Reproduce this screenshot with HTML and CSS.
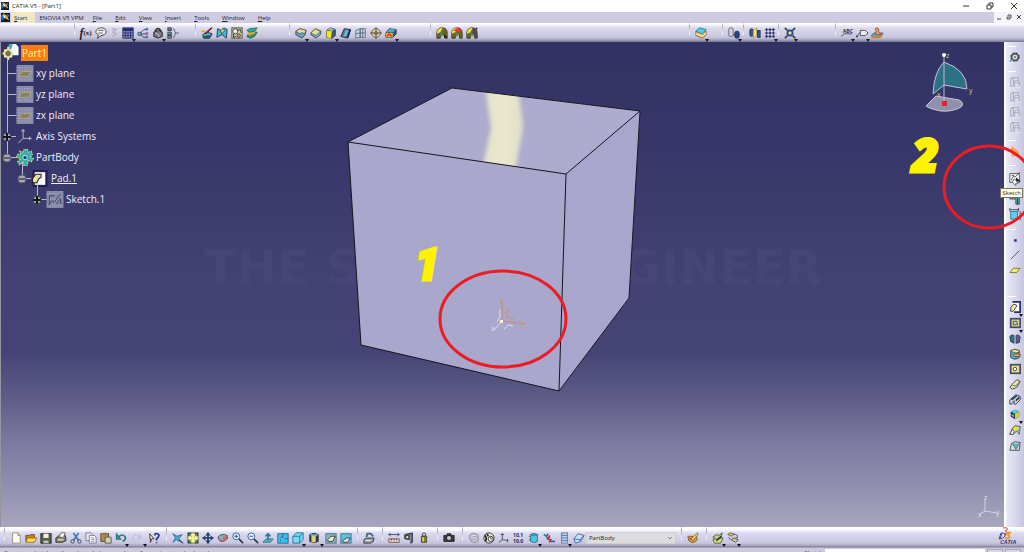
FILE: index.html
```html
<!DOCTYPE html>
<html lang="en">
<head>
<meta charset="utf-8">
<title>CATIA V5 - [Part1]</title>
<link rel="stylesheet" href="styles.css">
</head>
<body>
<svg class="defs" aria-hidden="true">
  <defs>
    <symbol id="logo" viewBox="0 0 10 10"><rect width="10" height="10" fill="#10182c"/><path d="M0 2L5 5L1 9Z" fill="#2a6fae"/><path d="M2 0L7 3L9 8L5 6Z" fill="#e8a33c"/><path d="M1 1L5 4L4 6Z" fill="#fff"/><path d="M6 1L9 2L9 5Z" fill="#2d76bd"/></symbol>
    <symbol id="bubble" viewBox="0 0 14 14"><path d="M1 6C1 3 4 1 8 1C12 1 13 4 13 6C13 8 10 10 7 10L3 13L4 9C2 8 1 7 1 6Z" fill="#eee" stroke="#333"/><path d="M4 4H10M4 7H9" stroke="#555"/></symbol>
    <symbol id="dim" viewBox="0 0 14 14"><path d="M5 2L9 3L6 6L9 8L6 11" fill="none" stroke="#b5b3c4" stroke-width="2"/></symbol>
    <symbol id="table" viewBox="0 0 14 14"><rect x="1" y="1" width="12" height="12" fill="#8d92bd" stroke="#22285e"/><path d="M1 3H13" stroke="#1d2569" stroke-width="3"/><path d="M1 7H13M1 10H13M4 3V13M7 3V13M10 3V13" stroke="#28307a"/></symbol>
    <symbol id="tree" viewBox="0 0 14 14"><path d="M3 8L8 3H11M3 8H11M3 8L8 12H11" fill="none" stroke="#335"/><circle cx="3" cy="8" r="2" fill="#59c3d9" stroke="#245"/><rect x="10" y="1" width="3" height="3" fill="#5577c5"/><rect x="10" y="6" width="3" height="3" fill="#b8578c"/><rect x="10" y="10" width="3" height="3" fill="#5577c5"/></symbol>
    <symbol id="lock" viewBox="0 0 14 14"><path d="M4 7V4Q7 0 10 4V7" fill="none" stroke="#333" stroke-width="2"/><path d="M2 6L8 4L12 6V11L7 13L2 11Z" fill="#77787e" stroke="#222"/><path d="M4 7L8 9V12" stroke="#ccc" fill="none"/></symbol>
    <symbol id="rules" viewBox="0 0 14 14"><rect x="1" y="1" width="4" height="3" fill="#638b98" stroke="#334"/><rect x="1" y="6" width="4" height="3" fill="#55b7c5" stroke="#334"/><rect x="1" y="10" width="4" height="3" fill="#888" stroke="#334"/><path d="M7 2Q9 2 9 5Q9 7 11 7Q9 7 9 10Q9 12 7 12M11 7H14" fill="none" stroke="#557"/></symbol>
    <symbol id="brush" viewBox="0 0 14 14"><path d="M2 9L7 6L13 8L10 13H3Z" fill="#285a78" stroke="#162c46"/><path d="M3 10L8 8L11 9" fill="none" stroke="#56cbd8" stroke-width="2"/><path d="M13 1L7 7L5 8L6 6L12 1Z" fill="#d6584c" stroke="#602"/><path d="M1 4L5 6" stroke="#e8a13e" stroke-width="2"/></symbol>
    <symbol id="surface" viewBox="0 0 14 14"><path d="M1 12L2 2L6 4L9 1L13 3L12 13L7 9Z" fill="#47b6ce" stroke="#17334e"/><path d="M5 4L7 8L11 3" fill="#f1d848" stroke="#233f80"/></symbol>
    <symbol id="gearbox" viewBox="0 0 14 14"><rect x="1" y="1" width="12" height="12" fill="#d6d09e" stroke="#4a4a42"/><circle cx="5" cy="5" r="3" fill="#eee" stroke="#333"/><circle cx="9" cy="10" r="2" fill="#aaa" stroke="#333"/><path d="M7 4L11 3L12 7M3 8L3 12L6 11" fill="none" stroke="#222"/></symbol>
    <symbol id="layers" viewBox="0 0 14 14"><path d="M1 11L4 7L13 6L10 11L5 13Z" fill="#33936f" stroke="#164"/><path d="M1 8L4 5L13 3L10 8L4 10Z" fill="#e6a434"/><path d="M1 4L4 2L13 1L10 5L4 6Z" fill="#32a2a5" stroke="#276"/></symbol>
    <symbol id="fillet" viewBox="0 0 14 14"><path d="M1 5L6 2L13 4L12 9L8 13L1 9Z" fill="#5aa6b8" stroke="#444"/><path d="M1 5L6 2L13 4L11 8Q8 5 6 8Z" fill="#e8dcae" stroke="#665"/></symbol>
    <symbol id="chamfer" viewBox="0 0 14 14"><path d="M1 7L6 2L13 5L12 9L7 13L1 9Z" fill="#62b6c9" stroke="#444"/><path d="M1 7L6 2L12 5L7 10Z" fill="#eadb9d" stroke="#665"/></symbol>
    <symbol id="draft" viewBox="0 0 14 14"><path d="M2 4L6 1L12 3V10L8 13L2 12Z" fill="#345c79" stroke="#333"/><path d="M2 4L8 5L7 13L2 12Z" fill="#f8e700"/><path d="M3 3L6 1L11 3L8 5Z" fill="#95bcc5"/></symbol>
    <symbol id="shell" viewBox="0 0 14 14"><path d="M1 11L5 2L12 3L9 13Z" fill="#617486" stroke="#223"/><path d="M4 11L7 3L10 4L7 11Z" fill="#54c2d1"/><path d="M12 3L9 12" stroke="#17205c" stroke-width="2"/></symbol>
    <symbol id="thick" viewBox="0 0 14 14"><path d="M1 4L6 2V12L1 13ZM6 2H12V12H6ZM9 2V12M1 8L6 7H12" fill="#c5dbe4" stroke="#586681"/></symbol>
    <symbol id="target" viewBox="0 0 14 14"><circle cx="7" cy="7" r="5" fill="#e7dcad" stroke="#554d43"/><path d="M0 7H14M7 0V14" stroke="#443b39"/><circle cx="7" cy="7" r="2" fill="none" stroke="#665"/></symbol>
    <symbol id="replace" viewBox="0 0 14 14"><path d="M1 7L5 2L13 3V8L9 12H1Z" fill="#2e668b" stroke="#223"/><path d="M1 7H9V12H1Z" fill="#f7bc38"/><path d="M2 11L5 8L8 11" fill="none" stroke="#df3f2a" stroke-width="2"/><path d="M5 2L13 3L9 6L2 6Z" fill="#51acc5"/></symbol>
    <symbol id="arch" viewBox="0 0 14 14"><path d="M1 13V6Q2 1 7 1Q13 1 13 7V13H10V9Q7 6 5 9V13Z" fill="#6c692d" stroke="#33351b"/><path d="M1 8Q1 1 8 1L5 6Z" fill="#f0e143"/><circle cx="7" cy="9" r="2" fill="#5d8b63"/></symbol>
    <symbol id="sheets" viewBox="0 0 14 14"><path d="M1 10L9 13L13 9V5L1 5Z" fill="#edb848" stroke="#864"/><path d="M1 8L9 11L13 7" fill="none" stroke="#fff"/><path d="M1 5L5 1L13 3L9 8Z" fill="#55cbe5" stroke="#28809d"/></symbol>
    <symbol id="cyls" viewBox="0 0 14 14"><rect x="1" y="1" width="5" height="10" rx="2" fill="#d5d5df" stroke="#556"/><rect x="8" y="5" width="5" height="8" rx="2" fill="#284680" stroke="#182c55"/><path d="M6 9H8" stroke="#333"/></symbol>
    <symbol id="bodies" viewBox="0 0 14 14"><rect x="1" y="2" width="4" height="9" rx="2" fill="#315586" stroke="#223463"/><path d="M5 4L9 1V10L5 13Z" fill="#efe28b" stroke="#aa9c47"/><rect x="10" y="4" width="3" height="8" fill="#315586" stroke="#223463"/></symbol>
    <symbol id="grid" viewBox="0 0 14 14"><path d="M1 3H13M1 7H13M1 11H13M3 1V13M7 1V13M11 1V13" stroke="#4a529a"/><path d="M2 3H4M6 3H8M10 3H12M2 7H4M6 7H8M10 7H12M2 11H4M6 11H8M10 11H12" stroke="#202565" stroke-width="2"/></symbol>
    <symbol id="snap" viewBox="0 0 14 14"><circle cx="7" cy="7" r="3" fill="#ebe46c" stroke="#248" stroke-width="2"/><path d="M1 1L4 4M13 1L10 4M1 13L4 10M13 13L10 10" stroke="#345" stroke-width="2"/></symbol>
    <symbol id="abc" viewBox="0 0 14 14"><text x="2" y="7" class="icon-text" font-size="6">ABC</text><path d="M0 11L4 8H13" fill="none" stroke="#446"/></symbol>
    <symbol id="tag" viewBox="0 0 14 14"><path d="M1 11L5 6M5 4H11L14 7L11 10H5Z" fill="#eee" stroke="#445"/><circle cx="1" cy="11" r="1" fill="#124"/></symbol>
    <symbol id="stamp" viewBox="0 0 14 14"><path d="M1 9L4 7H14L11 12H1Z" fill="#4bb7c7" stroke="#555"/><path d="M5 9L6 5L5 2Q8 -1 9 3L9 6L12 9Z" fill="#e5a66d" stroke="#943"/><path d="M1 12L10 12L13 9" stroke="#e57c22" fill="none" stroke-width="2"/></symbol>
    <symbol id="gear" viewBox="0 0 14 14"><circle cx="7" cy="7" r="4" fill="#d3d8df" stroke="#4a5058" stroke-width="2"/><circle cx="7" cy="7" r="5" fill="none" stroke="#333" stroke-dasharray="2 2"/><circle cx="7" cy="7" r="1" fill="#345"/><path d="M1 12L4 10" stroke="#39a9cd" stroke-width="2"/></symbol>
    <symbol id="ghost" viewBox="0 0 14 14"><path d="M2 3L5 2V11L2 12ZM6 6Q9 4 12 6V12Q9 14 6 12ZM6 8H12M3 2H11V5" fill="#dedeea" stroke="#a3a2b8"/><path d="M7 13H13" stroke="#fff"/></symbol>
    <symbol id="select" viewBox="0 0 14 14"><path d="M3 1L13 9L9 10L12 13H3Z" fill="#f3a347"/><path d="M5 6L9 10H5Z" fill="#fff0ce"/></symbol>
    <symbol id="sketch" viewBox="0 0 14 14"><rect x="1" y="2" width="11" height="10" fill="#fff" stroke="#444"/><path d="M3 10Q4 3 7 6L13 0M3 4H6" fill="none" stroke="#444"/><path d="M8 6L14 11H8Z" fill="#172b35"/><path d="M6 8L11 13L8 13L8 16L4 12Z" fill="#fff" stroke="#555"/></symbol>
    <symbol id="pos" viewBox="0 0 14 14"><path d="M1 3H12V13H8V7H1Z" fill="#54acb8" stroke="#345"/><path d="M10 3V13M1 2H13" stroke="#203562"/></symbol>
    <symbol id="ref" viewBox="0 0 14 14"><rect x="2" y="4" width="8" height="9" fill="#67cbe1" stroke="#327c96"/><path d="M1 2H11M1 0V4M11 0V4M13 4V14" stroke="#253c52"/></symbol>
    <symbol id="dot" viewBox="0 0 14 14"><rect x="6" y="6" width="3" height="3" fill="#29387c"/></symbol>
    <symbol id="line" viewBox="0 0 14 14"><path d="M2 12L12 2" stroke="#29488a" stroke-width="1"/></symbol>
    <symbol id="plane" viewBox="0 0 14 14"><path d="M1 10L5 5H13L9 10Z" fill="#f2ed68" stroke="#716d2c"/></symbol>
    <symbol id="pad" viewBox="0 0 14 14"><rect x="4" y="1" width="9" height="12" fill="#fff"/><path d="M4 1H13V13H6" fill="none" stroke="#242f67" stroke-width="2"/><path d="M2 8L5 4H8L9 6L5 12H2Z" fill="#eee7a3" stroke="#334"/></symbol>
    <symbol id="pocket" viewBox="0 0 14 14"><rect x="2" y="2" width="11" height="10" fill="#ddd783" stroke="#454d6b" stroke-width="2"/><path d="M5 5H9L10 9H5Z" fill="#b6d5db" stroke="#444"/></symbol>
    <symbol id="shaft" viewBox="0 0 14 14"><path d="M1 4Q3 1 6 3V12L2 10Z" fill="#287983" stroke="#243156"/><path d="M8 3Q12 1 13 5L12 11L8 12Z" fill="#52618c" stroke="#243156"/><path d="M7 1V14" stroke="#ccc"/></symbol>
    <symbol id="groove" viewBox="0 0 14 14"><path d="M2 3Q7 0 12 3V11Q7 15 2 11Z" fill="#47b6cc" stroke="#335"/><path d="M2 3Q7 0 12 3V5Q7 7 2 4Z" fill="#e5dfa0" stroke="#554"/><path d="M6 7H13V10H6Q4 8 6 7Z" fill="#eba56f" stroke="#743"/></symbol>
    <symbol id="hole" viewBox="0 0 14 14"><rect x="2" y="2" width="11" height="10" fill="#e8df90" stroke="#4a4b56" stroke-width="2"/><circle cx="7" cy="7" r="2" fill="#fff" stroke="#345"/></symbol>
    <symbol id="rib" viewBox="0 0 14 14"><path d="M1 11L4 7L9 2L13 4L9 11L4 13Z" fill="#ebe5ae" stroke="#353535"/><path d="M4 9H8L13 4" fill="none" stroke="#555"/></symbol>
    <symbol id="slot" viewBox="0 0 14 14"><path d="M1 8L8 2L13 4V8L8 13H6V9L3 13H1Z" fill="#d9d9c3" stroke="#25365c"/><path d="M3 8L9 3M8 9L12 5" stroke="#25365c" stroke-width="2"/></symbol>
    <symbol id="cube3" viewBox="0 0 14 14"><path d="M2 4L7 2L12 4V10L7 13L2 10Z" fill="#222f49"/><path d="M2 4L7 2L12 4L7 7Z" fill="#56cbd3"/><path d="M7 7L12 4V10L7 13Z" fill="#d9cd45"/><path d="M3 7L6 8V11L3 9Z" fill="#7bb660"/></symbol>
    <symbol id="loft" viewBox="0 0 14 14"><path d="M1 12L4 5L7 2L13 3L12 12L9 8L5 12Z" fill="#e9da58" stroke="#444"/><path d="M1 12L4 6L6 9L5 12Z" fill="#eef0e8" stroke="#555"/><path d="M9 8L12 5V11Z" fill="#71bec9"/></symbol>
    <symbol id="newdoc" viewBox="0 0 14 14"><path d="M3 1H9L12 4V13H3Z" fill="#fffce9" stroke="#8d8b7e"/><path d="M9 1V4H12" fill="none" stroke="#8d8b7e"/></symbol>
    <symbol id="open" viewBox="0 0 14 14"><path d="M1 4H5L7 3H11V11H1Z" fill="#bd8519" stroke="#744"/><path d="M3 7H14L11 12H1Z" fill="#ffd94e" stroke="#8a6a25"/></symbol>
    <symbol id="save" viewBox="0 0 14 14"><rect x="1" y="2" width="12" height="11" fill="#595f42" stroke="#20261c"/><rect x="4" y="2" width="6" height="5" fill="#eef0e8"/><rect x="4" y="10" width="6" height="3" fill="#bfc3b9"/></symbol>
    <symbol id="print" viewBox="0 0 14 14"><path d="M1 7L5 4H12L13 10L9 12H1Z" fill="#77777b" stroke="#333"/><path d="M5 5L7 1H12L10 6" fill="#fff" stroke="#555"/><path d="M3 9H10" stroke="#ded986" stroke-width="2"/></symbol>
    <symbol id="cut" viewBox="0 0 14 14"><path d="M4 1L10 10M10 1L4 10" stroke="#357db3" stroke-width="2"/><circle cx="3" cy="11" r="2" fill="none" stroke="#334"/><circle cx="11" cy="11" r="2" fill="none" stroke="#334"/></symbol>
    <symbol id="copy" viewBox="0 0 14 14"><path d="M1 1H7L9 3V10H1Z" fill="#e7e7ed" stroke="#777784"/><path d="M5 4H11L13 6V13H5Z" fill="#f5f5ff" stroke="#70779a"/><path d="M7 7H11M7 9H11M7 11H11" stroke="#8992b0"/></symbol>
    <symbol id="paste" viewBox="0 0 14 14"><rect x="1" y="2" width="9" height="9" fill="#b18a44" stroke="#554a36"/><rect x="4" y="1" width="3" height="2" fill="#777"/><path d="M6 6H13V13H6Z" fill="#cfd1b6" stroke="#4d5554"/></symbol>
    <symbol id="undo" viewBox="0 0 14 14"><path d="M2 8V3L6 8ZM4 6Q9 1 12 6Q13 9 9 11" fill="none" stroke="#287b89" stroke-width="2"/></symbol>
    <symbol id="redo" viewBox="0 0 14 14"><path d="M12 7L11 3L8 8ZM10 6Q5 1 2 6Q1 9 5 11" fill="none" stroke="#bab9c9"/></symbol>
    <symbol id="help" viewBox="0 0 14 14"><path d="M2 2L7 8H4L3 12Z" fill="#fff" stroke="#222"/><path d="M8 4Q8 1 11 2Q14 3 12 6L10 8V10M10 12V13" fill="none" stroke="#203a80" stroke-width="2"/></symbol>
    <symbol id="fly" viewBox="0 0 14 14"><path d="M1 2L6 5L12 3L8 8L13 13L5 9L1 12L4 7Z" fill="#42abc5" stroke="#287495"/><path d="M8 9L13 13" stroke="#2f405f"/></symbol>
    <symbol id="fit" viewBox="0 0 14 14"><rect x="1" y="1" width="12" height="12" fill="#f4f19b" stroke="#6c6a4b"/><path d="M2 5V2H5M9 2H12V5M12 9V12H9M5 12H2V9" fill="none" stroke="#33583f" stroke-width="2"/><path d="M3 3L11 11M11 3L3 11" stroke="#526b46"/><rect x="5" y="5" width="4" height="4" fill="#f4f19b"/></symbol>
    <symbol id="pan" viewBox="0 0 14 14"><path d="M7 1V13M1 7H13" stroke="#223e70" stroke-width="2"/><path d="M4 4L7 0L10 4ZM4 10L7 14L10 10ZM4 4L0 7L4 10ZM10 4L14 7L10 10Z" fill="#223e70"/></symbol>
    <symbol id="rotate" viewBox="0 0 14 14"><path d="M1 6Q5 1 12 4V8Q7 13 3 10Z" fill="#91a8b9" stroke="#445"/><path d="M4 10Q10 11 11 6L7 7" fill="none" stroke="#cc625a" stroke-width="2"/></symbol>
    <symbol id="zoomin" viewBox="0 0 14 14"><path d="M8 8L13 13" stroke="#353b4c" stroke-width="2"/><circle cx="5" cy="5" r="4" fill="#e1f6ff" stroke="#294b86"/><path d="M3 5H7M5 3V7" stroke="#203c75"/></symbol>
    <symbol id="zoomout" viewBox="0 0 14 14"><path d="M8 8L13 13" stroke="#353b4c" stroke-width="2"/><circle cx="5" cy="5" r="4" fill="#e1f6ff" stroke="#294b86"/><path d="M3 5H7" stroke="#203c75"/></symbol>
    <symbol id="normal" viewBox="0 0 14 14"><path d="M1 12L5 8H13L10 12Z" fill="#54b9c7" stroke="#327585"/><path d="M7 10V2M4 5L7 2L10 5" fill="none" stroke="#34799a" stroke-width="2"/></symbol>
    <symbol id="multi" viewBox="0 0 14 14"><rect x="1" y="2" width="12" height="11" fill="#3bc2e8" stroke="#245e93"/><path d="M7 2V6H4M9 8H13M4 9V11" stroke="#245e93" fill="none"/></symbol>
    <symbol id="iso" viewBox="0 0 14 14"><path d="M1 5L5 1H13V9L9 13H1Z" fill="#77daed" stroke="#286e9c"/><path d="M1 5H9V13M9 5L13 1" fill="none" stroke="#286e9c"/></symbol>
    <symbol id="shade" viewBox="0 0 14 14"><path d="M2 3Q7 0 12 3V11Q7 14 2 11Z" fill="#293e51" stroke="#333"/><path d="M4 4H9V12H4Z" fill="#e5cf75"/><path d="M3 3Q7 5 11 3" fill="none" stroke="#75b5c6" stroke-width="2"/></symbol>
    <symbol id="hide" viewBox="0 0 14 14"><rect x="1" y="2" width="12" height="11" fill="#84b5b9" stroke="#4b7076"/><path d="M3 9L7 5H12L9 11H4Z" fill="#eee9c4" stroke="#335"/></symbol>
    <symbol id="swap" viewBox="0 0 14 14"><rect x="1" y="2" width="12" height="11" fill="#54c2e1" stroke="#52716f"/><path d="M3 10L8 7H12L9 12H4Z" fill="#eee9c4" stroke="#335"/></symbol>
    <symbol id="plot" viewBox="0 0 14 14"><path d="M1 9L4 7H13L12 11L9 13H1Z" fill="#999cad" stroke="#333"/><path d="M4 6L5 2H9L12 5" fill="none" stroke="#33697f" stroke-width="2"/><path d="M3 10H9" stroke="#fff"/></symbol>
    <symbol id="measure" viewBox="0 0 14 14"><path d="M1 3H13M3 1L1 3L3 5M11 1L13 3L11 5" fill="none" stroke="#283b7a"/><rect x="1" y="8" width="12" height="4" fill="#efd9c7" stroke="#754a4a"/><path d="M4 8V10M7 8V10M10 8V10" stroke="#444"/></symbol>
    <symbol id="caliper" viewBox="0 0 14 14"><path d="M2 3L11 1V12L9 13V9L2 8Z" fill="#555c68" stroke="#303542"/><circle cx="5" cy="6" r="2" fill="#ddd" stroke="#222"/><path d="M9 3V11" stroke="#a3a6c0"/></symbol>
    <symbol id="weight" viewBox="0 0 14 14"><circle cx="7" cy="3" r="2" fill="none" stroke="#333"/><path d="M4 5H10V12H4Z" fill="#8d8320" stroke="#443f20"/><path d="M6 6V11" stroke="#e2d35a" stroke-width="2"/></symbol>
    <symbol id="camera" viewBox="0 0 14 14"><path d="M1 4H4L5 2H9L10 4H13V11H1Z" fill="#3a3b43" stroke="#222"/><circle cx="7" cy="7" r="3" fill="#c2c6cc" stroke="#111"/></symbol>
    <symbol id="update" viewBox="0 0 14 14"><path d="M3 9Q0 4 5 2Q12 1 12 6M11 5Q14 11 8 12Q3 12 3 8" fill="none" stroke="#a6a5ae" stroke-width="2"/><path d="M4 6L10 5M5 9L10 8" stroke="#999"/></symbol>
    <symbol id="globe" viewBox="0 0 14 14"><circle cx="7" cy="7" r="6" fill="#e9ead7" stroke="#333"/><path d="M2 4Q5 7 3 11M5 2L6 5" fill="none" stroke="#222" stroke-width="2"/><circle cx="9" cy="8" r="3" fill="#fff" stroke="#222"/><path d="M9 6V8H11" fill="none" stroke="#222"/></symbol>
    <symbol id="axis" viewBox="0 0 14 14"><path d="M5 1V9L12 10M5 9L1 12" fill="none" stroke="#45455e"/><path d="M3 3H7M11 8V12" stroke="#45455e"/></symbol>
    <symbol id="mean" viewBox="0 0 14 14"><text x="0" y="6" class="icon-text" font-size="6">10.1</text><text x="0" y="13" class="icon-text" font-size="6">10.0</text></symbol>
    <symbol id="cyl" viewBox="0 0 14 14"><path d="M3 3Q7 0 11 3V11Q7 14 3 11Z" fill="#49c7dc" stroke="#30728a"/><path d="M3 3Q7 5 11 3M1 5H3M1 9H3" fill="none" stroke="#28657c"/></symbol>
    <symbol id="constraint" viewBox="0 0 14 14"><path d="M1 3L4 5L6 2M4 5L6 9" fill="none" stroke="#3478a0" stroke-width="2"/><path d="M8 4L6 8L9 9L7 12" fill="none" stroke="#bb3240" stroke-width="2"/><path d="M8 11H14" stroke="#48618a" stroke-width="2"/></symbol>
    <symbol id="catalog" viewBox="0 0 14 14"><rect x="4" y="1" width="7" height="12" fill="#b8d0e9" stroke="#68779a"/><path d="M4 4H11M4 7H11M4 10H11" stroke="#4d75ae"/></symbol>
    <symbol id="clipbox" viewBox="0 0 14 14"><path d="M1 8L6 2L13 4L9 11L3 13Z" fill="#c8e3f1" stroke="#375f9a"/><path d="M1 8L8 9L13 4M8 9L9 11" fill="none" stroke="#375f9a"/></symbol>
    <symbol id="palette" viewBox="0 0 14 14"><path d="M1 5H11L12 9Q7 15 2 10Z" fill="#de973c" stroke="#84542d"/><path d="M5 8L12 1L13 3L7 10Z" fill="#f0df54" stroke="#764"/><circle cx="4" cy="8" r="1" fill="#bf3a30"/></symbol>
    <symbol id="scan" viewBox="0 0 14 14"><path d="M1 9L5 7H13L10 13H3Z" fill="#e4d870" stroke="#3f554c"/><path d="M1 6L5 3L8 4L12 1L10 7L6 9Z" fill="#c8cf76" stroke="#3a564d"/><path d="M5 10L11 5" stroke="#213c38" stroke-width="2"/></symbol>
    <symbol id="param" viewBox="0 0 14 14"><path d="M1 3L3 1L8 2L6 5Z" fill="#e8cd61" stroke="#554"/><path d="M8 3Q13 2 12 7L10 6M2 6L4 9" fill="none" stroke="#36436d"/><path d="M5 9L8 7L13 9L10 12Z" fill="#e6d65b" stroke="#446"/></symbol>
    <symbol id="node-plane" viewBox="0 0 18 18"><rect width="18" height="18" fill="#8587a5"/><path d="M0 3H18M0 6H18M0 9H18M0 12H18M0 15H18M3 0V18M6 0V18M9 0V18M12 0V18M15 0V18" stroke="#a6a8bd" stroke-dasharray="1 1"/><path d="M2 12L6 7H16L12 12Z" fill="#85815d" stroke="#b1a97c"/></symbol>
    <symbol id="node-sketch" viewBox="0 0 18 18"><rect width="18" height="18" fill="#8688a6"/><path d="M0 3H18M0 9H18M0 15H18M3 0V18M9 0V18M15 0V18" stroke="#a5a7bf" stroke-dasharray="1 1"/><path d="M3 15V5H9M3 15Q5 8 8 12L15 3M10 14L15 8V14" fill="none" stroke="#3c4260"/></symbol>
    <symbol id="node-body" viewBox="0 0 16 16"><path d="M7 0H10L11 3L14 2L15 5L13 7L16 9L14 12L11 11L10 16H7L6 12L3 15L1 12L4 9L0 8L1 5L4 5L3 2L6 3Z" fill="#3aacae" stroke="#d1dd70" stroke-dasharray="2 1"/><circle cx="8" cy="8" r="2" fill="#262b55" stroke="#75e0e6"/></symbol>
    <symbol id="node-root" viewBox="0 0 18 18"><path d="M7 0H14L17 3V12H7Z" fill="#f6ffff"/><path d="M7 0H11L8 9H5Z" fill="#42aeb8"/><circle cx="6" cy="10" r="4" fill="#75724e" stroke="#efe6a4" stroke-width="2"/><path d="M6 3V6M6 14V17M0 10H2M10 10H12M2 6L4 8M10 14L8 12M2 14L4 12M10 6L8 8" stroke="#f0e8ad" stroke-width="2"/></symbol>
    <symbol id="expander" viewBox="0 0 10 10"><circle cx="5" cy="5" r="4" fill="#aaa9b5" stroke="#5e5e6d"/><path d="M2 5H8" stroke="#111"/></symbol>
    <symbol id="expander-plus" viewBox="0 0 10 10"><circle cx="5" cy="5" r="4" fill="#aaa9b5" stroke="#4e4e5d"/><path d="M1 5H9M5 1V9" stroke="#15151c" stroke-width="2"/></symbol>
    <linearGradient id="highlight"><stop offset="0" stop-color="#e4e1cc"/><stop offset=".5" stop-color="#eae7cd"/><stop offset="1" stop-color="#e2dfcb"/></linearGradient>
    <filter id="soft" x="-20%" y="-10%" width="140%" height="120%"><feGaussianBlur stdDeviation="2"/></filter>
    <clipPath id="topface"><path d="M348 100L452 46L640 69L566 132Z"/></clipPath>
  </defs>
</svg>

<div class="app">
  <header class="titlebar">
    <svg class="logo"><use href="#logo"/></svg>
    <h1>CATIA V5 - [Part1]</h1>
    <div class="window-controls">
      <button aria-label="Minimize"><svg viewBox="0 0 8 8"><path d="M1 4H7" stroke="#333"/></svg></button>
      <button aria-label="Restore"><svg viewBox="0 0 8 8"><path d="M1 3H5V7H1ZM3 3V1H7V5H5" fill="none" stroke="#333"/></svg></button>
      <button aria-label="Close"><svg viewBox="0 0 8 8"><path d="M1 1L7 7M7 1L1 7" stroke="#333"/></svg></button>
    </div>
  </header>

  <nav class="menubar" aria-label="Main menu">
    <svg class="logo"><use href="#logo"/></svg>
    <button class="start"><u>S</u>tart</button>
    <button class="wide-menu">ENOVIA V5 VPM</button>
    <button><u>F</u>ile</button>
    <button><u>E</u>dit</button>
    <button><u>V</u>iew</button>
    <button><u>I</u>nsert</button>
    <button><u>T</u>ools</button>
    <button><u>W</u>indow</button>
    <button><u>H</u>elp</button>
    <div class="doc-controls">
      <button aria-label="Minimize document"><svg viewBox="0 0 8 8"><path d="M2 6H6" stroke="#444"/></svg></button>
      <button aria-label="Restore document"><svg viewBox="0 0 8 8"><path d="M2 4H5V6H2ZM3 3V2H6V5" fill="none" stroke="#555"/></svg></button>
      <button aria-label="Close document"><svg viewBox="0 0 8 8"><path d="M2 2L6 6M6 2L2 6" stroke="#444"/></svg></button>
    </div>
  </nav>

  <div class="toolbar toolbar-top" role="toolbar" aria-label="Modelling tools">
    <div class="group first"></div>
    <div class="group">
      <button class="formula" aria-label="Formula"><i>f</i><small>(x)</small></button>
      <button aria-label="Comment"><svg><use href="#bubble"/></svg></button>
      <button class="narrow" aria-label="Check"><svg><use href="#dim"/></svg></button>
      <button class="dd" aria-label="Design table"><svg><use href="#table"/></svg></button>
      <button aria-label="Relations"><svg><use href="#tree"/></svg></button>
      <button class="dd" aria-label="Lock"><svg><use href="#lock"/></svg></button>
      <button aria-label="Rules"><svg><use href="#rules"/></svg></button>
    </div>
    <div class="group">
      <button aria-label="Apply material"><svg><use href="#brush"/></svg></button>
      <button aria-label="Surface"><svg><use href="#surface"/></svg></button>
      <button aria-label="Mechanism"><svg><use href="#gearbox"/></svg></button>
      <button aria-label="Layers"><svg><use href="#layers"/></svg></button>
    </div>
    <div class="group">
      <button class="dd" aria-label="Edge fillet"><svg><use href="#fillet"/></svg></button>
      <button aria-label="Chamfer"><svg><use href="#chamfer"/></svg></button>
      <button class="dd" aria-label="Draft angle"><svg><use href="#draft"/></svg></button>
      <button aria-label="Shell"><svg><use href="#shell"/></svg></button>
      <button aria-label="Thickness"><svg><use href="#thick"/></svg></button>
      <button aria-label="Thread"><svg><use href="#target"/></svg></button>
      <button class="dd" aria-label="Replace face"><svg><use href="#replace"/></svg></button>
    </div>
    <div class="group">
      <button aria-label="Draft analysis"><svg viewBox="0 0 14 14"><use href="#arch"/><path d="M8 7L14 13L10 12Z" fill="#111"/></svg></button>
      <button aria-label="Curvature analysis"><svg viewBox="0 0 14 14"><use href="#arch"/><path d="M3 4L8 1L13 4L8 6Z" fill="#e13b35"/></svg></button>
      <button aria-label="Tap analysis"><svg viewBox="0 0 14 14"><use href="#arch"/><path d="M8 2L13 12M13 1L8 8" stroke="#513d75" stroke-width="2"/></svg></button>
    </div>
    <div class="group"><button class="dd" aria-label="Sheets"><svg><use href="#sheets"/></svg></button></div>
    <div class="group"><button class="dd" aria-label="Bodies"><svg><use href="#cyls"/></svg></button></div>
    <div class="group">
      <button aria-label="Symmetry"><svg><use href="#bodies"/></svg></button>
      <button class="dd" aria-label="Pattern"><svg><use href="#grid"/></svg></button>
    </div>
    <div class="group"><button class="dd" aria-label="Scaling"><svg><use href="#snap"/></svg></button></div>
    <div class="group">
      <button class="dd" aria-label="Text annotation"><svg><use href="#abc"/></svg></button>
      <button class="dd" aria-label="Flag note"><svg><use href="#tag"/></svg></button>
      <button aria-label="Stamp"><svg><use href="#stamp"/></svg></button>
    </div>
  </div>

  <main class="workspace">
    <section class="viewport" aria-label="Part viewport">
      <ul class="spec-tree">
        <li class="root"><svg class="node"><use href="#node-root"/></svg><span class="selected">Part1</span></li>
        <li><svg class="node"><use href="#node-plane"/></svg><span>xy plane</span></li>
        <li><svg class="node"><use href="#node-plane"/></svg><span>yz plane</span></li>
        <li><svg class="node"><use href="#node-plane"/></svg><span>zx plane</span></li>
        <li><svg class="expander"><use href="#expander-plus"/></svg><svg class="node" viewBox="0 0 18 18"><path d="M7 1V11L16 11M7 11L2 16M5 3H9M14 9V13" fill="none" stroke="#c6c2b8"/></svg><span>Axis Systems</span></li>
        <li><svg class="expander"><use href="#expander"/></svg><svg class="node"><use href="#node-body"/></svg><span>PartBody</span></li>
        <li class="level2"><svg class="expander"><use href="#expander"/></svg><svg class="node" viewBox="0 0 16 16"><rect x="2" y="1" width="12" height="14" fill="#f7f8ff" stroke="#20204a" stroke-width="2"/><path d="M1 12V8L4 4H9V7L7 8L5 12Z" fill="#ebe2a0" stroke="#222"/></svg><span class="active">Pad.1</span></li>
        <li class="level3"><svg class="expander"><use href="#expander-plus"/></svg><svg class="node"><use href="#node-sketch"/></svg><span>Sketch.1</span></li>
      </ul>
    </section>

    <aside class="sidebar" role="toolbar" aria-label="Sketch-based features">
      <div class="group"><button aria-label="Workbench"><svg><use href="#gear"/></svg></button></div>
      <div class="group">
        <button aria-label="Union" disabled><svg><use href="#ghost"/></svg></button>
        <button aria-label="Assemble" disabled><svg><use href="#ghost"/></svg></button>
        <button aria-label="Trim" disabled><svg><use href="#ghost"/></svg></button>
        <button aria-label="Remove lump" disabled><svg><use href="#ghost"/></svg></button>
      </div>
      <div class="group"><button aria-label="Select"><svg><use href="#select"/></svg></button></div>
      <div class="group">
        <button class="sketch-tool" aria-describedby="tip" aria-label="Sketch"><svg><use href="#sketch"/></svg><span id="tip" class="tooltip" role="tooltip">Sketch</span></button>
        <button aria-label="Positioned sketch"><svg><use href="#pos"/></svg></button>
        <button aria-label="Reference"><svg><use href="#ref"/></svg></button>
      </div>
      <div class="group">
        <button aria-label="Point"><svg><use href="#dot"/></svg></button>
        <button aria-label="Line"><svg><use href="#line"/></svg></button>
        <button aria-label="Plane"><svg><use href="#plane"/></svg></button>
      </div>
      <div class="group">
        <button class="dd tall" aria-label="Pad"><svg><use href="#pad"/></svg></button>
        <button class="dd tall" aria-label="Pocket"><svg><use href="#pocket"/></svg></button>
        <button aria-label="Shaft"><svg><use href="#shaft"/></svg></button>
        <button aria-label="Groove"><svg><use href="#groove"/></svg></button>
        <button aria-label="Hole"><svg><use href="#hole"/></svg></button>
        <button aria-label="Rib"><svg><use href="#rib"/></svg></button>
        <button aria-label="Slot"><svg><use href="#slot"/></svg></button>
        <button class="dd tall" aria-label="Solid combine"><svg><use href="#cube3"/></svg></button>
        <button class="tall" aria-label="Multi-sections solid"><svg><use href="#loft"/></svg></button>
        <button aria-label="Removed multi-sections solid"><svg viewBox="0 0 14 14"><path d="M1 12L3 4L7 2L13 3L12 12Z" fill="#d9dfd5" stroke="#444"/><path d="M4 4L8 11L12 4" fill="#5cb9cc" stroke="#2e7389"/></svg></button>
      </div>
    </aside>

    <svg class="scene" viewBox="0 0 1024 485" role="img" aria-label="Pad with axis system">
      <text class="watermark" x="204" y="242">THE S</text>
      <text class="watermark" x="822" y="242" text-anchor="end">GINEER</text>
      <path d="M348 100L452 46L640 69L629 256L559 349L361 303Z" fill="#a9a7cc"/>
      <path d="M348 100L452 46L640 69L566 132Z" fill="#adabce"/>
      <path d="M566 132L640 69L629 256L559 349Z" fill="#a8a6cc"/>
      <g clip-path="url(#topface)"><path d="M485 44H518L523 84L515 132H481L491 86Z" fill="url(#highlight)" filter="url(#soft)"/></g>
      <path d="M348 100L452 46L640 69L566 132ZM348 100L361 303L559 349L566 132M559 349L629 256L640 69" fill="none" stroke="#15151e"/>
      <path d="M502 259V279L526 282M507 267V275L514 277" fill="none" stroke="#cf8a68"/>
      <path d="M500 267V275L497 280M501 280L494 288M504 287L508 283L513 284" fill="none" stroke="#dedded"/>
      <rect x="500" y="278" width="3" height="3" fill="#fff1cf"/>
      <text x="500" y="262" class="axis-label warm">z</text><text x="521" y="284" class="axis-label warm">y</text><text x="491" y="289" class="axis-label">x</text>
      <ellipse cx="503" cy="277" rx="63" ry="48" class="ring"/>
      <text class="callout one" x="415" y="238">1</text>
      <text class="callout two" x="912" y="130">2</text>
      <path d="M926 64L936 54L959 58Q965 61 961 65Q953 70 941 69Q930 67 926 64Z" fill="#8f90ad" stroke="#c9c6da"/>
      <path d="M944 20Q934 30 933 52L944 43L967 47Q967 28 944 20Z" fill="#2c7185" stroke="#c4c1d8"/>
      <path d="M944 14V62" stroke="#bbb8d0"/><circle cx="944" cy="13" r="2" fill="#fff"/>
      <rect x="942" y="59" width="5" height="5" fill="#e0252c"/>
      <text x="946" y="16" class="axis-label gold">z</text><text x="969" y="51" class="axis-label gold">y</text><text x="937" y="55" class="axis-label gold">x</text>
      <path d="M985 458V469L997 471M985 469L980 472" fill="none" stroke="#d6d5e0"/>
      <text x="984" y="458" class="axis-label">z</text><text x="996" y="473" class="axis-label">y</text><text x="978" y="475" class="axis-label">x</text>
      <ellipse cx="989" cy="145" rx="45" ry="41" class="ring"/>
    </svg>
  </main>

  <div class="toolbar toolbar-bottom" role="toolbar" aria-label="Standard and view tools">
    <div class="group first"></div>
    <div class="group">
      <button aria-label="New"><svg><use href="#newdoc"/></svg></button>
      <button aria-label="Open"><svg><use href="#open"/></svg></button>
      <button aria-label="Save"><svg><use href="#save"/></svg></button>
      <button aria-label="Print"><svg><use href="#print"/></svg></button>
      <button aria-label="Cut"><svg><use href="#cut"/></svg></button>
      <button aria-label="Copy"><svg><use href="#copy"/></svg></button>
      <button aria-label="Paste"><svg><use href="#paste"/></svg></button>
      <button class="dd" aria-label="Undo"><svg><use href="#undo"/></svg></button>
      <button class="dd roomy" aria-label="Redo"><svg><use href="#redo"/></svg></button>
      <button aria-label="What's this?"><svg><use href="#help"/></svg></button>
    </div>
    <div class="group">
      <button aria-label="Fly mode"><svg><use href="#fly"/></svg></button>
      <button aria-label="Fit all in"><svg><use href="#fit"/></svg></button>
      <button aria-label="Pan"><svg><use href="#pan"/></svg></button>
      <button aria-label="Rotate"><svg><use href="#rotate"/></svg></button>
      <button aria-label="Zoom in"><svg><use href="#zoomin"/></svg></button>
      <button aria-label="Zoom out"><svg><use href="#zoomout"/></svg></button>
      <button aria-label="Normal view"><svg><use href="#normal"/></svg></button>
      <button aria-label="Multi-view"><svg><use href="#multi"/></svg></button>
      <button class="dd" aria-label="Isometric view"><svg><use href="#iso"/></svg></button>
      <button class="dd roomy" aria-label="Shading"><svg><use href="#shade"/></svg></button>
      <button aria-label="Hide/show"><svg><use href="#hide"/></svg></button>
      <button aria-label="Swap visible space"><svg><use href="#swap"/></svg></button>
    </div>
    <div class="group"><button aria-label="Quick print"><svg><use href="#plot"/></svg></button></div>
    <div class="group">
      <button aria-label="Measure between"><svg><use href="#measure"/></svg></button>
      <button aria-label="Measure item"><svg><use href="#caliper"/></svg></button>
      <button aria-label="Measure inertia"><svg><use href="#weight"/></svg></button>
    </div>
    <div class="group"><button aria-label="Capture"><svg><use href="#camera"/></svg></button></div>
    <div class="group">
      <button aria-label="Update all"><svg><use href="#update"/></svg></button>
      <button aria-label="Manual update"><svg><use href="#globe"/></svg></button>
      <button aria-label="Axis system"><svg><use href="#axis"/></svg></button>
      <button aria-label="Mean dimensions"><svg><use href="#mean"/></svg></button>
      <button class="dd" aria-label="Create datum"><svg><use href="#cyl"/></svg></button>
      <button aria-label="Constraint"><svg><use href="#constraint"/></svg></button>
      <button class="dd" aria-label="Catalog"><svg><use href="#catalog"/></svg></button>
      <button aria-label="Body"><svg><use href="#clipbox"/></svg></button>
      <select aria-label="Current body"><option>PartBody</option></select>
    </div>
    <div class="group"><button aria-label="Graphic properties"><svg><use href="#palette"/></svg></button></div>
    <div class="group">
      <button class="dd" aria-label="Scan"><svg><use href="#scan"/></svg></button>
      <button class="dd" aria-label="Parameters"><svg><use href="#param"/></svg></button>
    </div>
    <svg class="brand" viewBox="0 0 24 20" role="img" aria-label="DS CATIA">
      <path d="M5 1Q11 0 9 3L7 4Q11 5 6 8" fill="none" stroke="#d84a35"/>
      <path d="M3 6Q9 6 7 9Q5 12 1 12ZM2 12L4 6" fill="none" stroke="#484e86"/>
      <path d="M13 6Q9 5 9 7Q13 9 11 11Q9 12 7 11" fill="none" stroke="#eb9d2c" stroke-width="2"/>
      <text x="2" y="17">CATIA</text>
    </svg>
  </div>

  <footer class="statusbar">
    <span>Creates a sketch on the selected plane or planar face using standard modes</span>
    <label for="command">Sketch</label><input id="command" type="text">
    <button aria-label="Power input"></button><button aria-label="Command list"></button>
  </footer>
</div>
</body>
</html>
```

FILE: styles.css
```css
* { box-sizing: border-box; }
body { margin: 0; font-family: "Open Sans", "Noto Sans", sans-serif; overflow: hidden; }
button { margin: 0; padding: 0; border: 0; background: none; font: inherit; color: inherit; }
.defs { position: absolute; width: 0; height: 0; }

.app {
  height: 100vh;
  display: grid;
  grid-template-rows: 12px 11px 19px minmax(0, 1fr) 21px 4px;
  background: #cfcde2;
}

.logo { width: 8px; height: 8px; flex: none; }

.titlebar { display: flex; align-items: center; gap: 3px; padding-left: 1px; background: #fff; }
.titlebar h1 { margin: 0; font-size: 6px; font-weight: 400; line-height: 10px; color: #222; }
.window-controls { margin-left: auto; display: flex; gap: 16px; padding-right: 6px; }
.window-controls button, .doc-controls button { display: flex; width: 8px; height: 8px; }
.window-controls svg, .doc-controls svg { width: 8px; height: 8px; }

.menubar { display: flex; align-items: center; gap: 1px; padding-left: 1px; background: #cfcbe0; font-size: 6px; line-height: 10px; color: #1e1e2c; }
.menubar > button { padding: 0 6px; height: 11px; }
.menubar .logo { width: 9px; height: 9px; }
.menubar .start { padding: 0 8px 0 3px; background: #f2e7c4; }
.menubar .wide-menu { padding: 0 2px 0 3px; }
.doc-controls { margin-left: auto; display: flex; gap: 2px; padding: 1px; height: 11px; background: #f5f4fa; }

.toolbar { display: grid; align-items: stretch; }
.toolbar-top {
  grid-template-columns: 74px 121px 94px 141px 259px 33px 21px 35px 57px 1fr;
  background: linear-gradient(#fff 0, #f4f3fb 2px, #dcdaea 5px, #c8c6df 14px, #b3b1c9 16px, #77758f 19px);
}
.toolbar-bottom {
  grid-template-columns: 4px 162px 191px 25px 55px 25px 219px 25px 1fr 26px;
  background: linear-gradient(#fff 0, #f8f7ff 3px, #dcdaf0 6px, #c9c7e0 16px, #a3a1ba 19px, #77758b 20px, #d0cee0 21px);
}
.toolbar .group { display: flex; align-items: center; padding-left: 3px; min-width: 0; border-left: 1px solid #a9a7bd; border-image: linear-gradient(#dcdaea 15%, #9d9bb3 15%, #fff 60%, transparent 60%) 1; }
.toolbar .group.first { border: 0; padding: 0; }
.toolbar button, .sidebar button { position: relative; flex: none; display: flex; align-items: center; justify-content: center; width: 15px; height: 15px; }
.toolbar button.narrow { width: 12px; }
.toolbar button.roomy { width: 18px; }
.toolbar button svg, .sidebar button > svg { flex: none; width: 12px; height: 12px; }
.toolbar svg, .sidebar svg, symbol { overflow: visible; }
.toolbar button.formula { font-family: "Liberation Serif", serif; font-size: 12px; font-weight: 700; line-height: 12px; color: #20202b; }
.formula small { font-size: 7px; }
.dd::after { content: ""; position: absolute; right: -1px; bottom: -2px; border: 2px solid transparent; border-top: 3px solid #15151c; border-bottom: 0; }
.icon-text { font-family: "Open Sans", sans-serif; font-weight: 700; fill: #26305c; }

.toolbar select {
  flex: 1;
  min-width: 0;
  height: 12px;
  margin-right: 5px;
  padding: 0 2px;
  border: 1px solid #d0cfd4;
  border-radius: 0;
  background: #dddce1 url("data:image/svg+xml,%3Csvg xmlns='http://www.w3.org/2000/svg' viewBox='0 0 6 4'%3E%3Cpath d='M1 1L3 3L5 1' fill='none' stroke='%23888'/%3E%3C/svg%3E") no-repeat right 2px center / 6px 4px;
  appearance: none;
  font: 6px/10px "Open Sans", sans-serif;
  color: #222;
}
.brand { width: 24px; height: 20px; }
.brand text { font: italic 700 6px "Open Sans", sans-serif; fill: #3b3f79; }

.workspace { position: relative; display: grid; grid-template-columns: minmax(0, 1fr) 20px; min-height: 0; overflow: hidden; }
.viewport {
  border-left: 1px solid #96949f;
  background: linear-gradient(#323264 0%, #36366a 20%, #3d3c6d 36%, #444274 50%, #464475 64%, #5a5884 72%, #7d7b9f 83%, #9290b0 92%, #a8a6be 100%);
}
.scene { position: absolute; inset: 0; width: 100%; height: 100%; pointer-events: none; }
.watermark { font: 700 48px "DejaVu Sans", sans-serif; fill: #4c4a7b; opacity: .5; }
.ring { fill: none; stroke: #ed1c24; stroke-width: 3; }
.callout { fill: #fff200; stroke: #fff200; font-style: italic; font-weight: 900; }
.callout.one { font-family: Roboto, sans-serif; font-size: 44px; stroke-width: 3; }
.callout.two { font-family: "Open Sans", sans-serif; font-weight: 800; font-size: 46px; stroke-width: 3; }
.axis-label { font: 7px "Open Sans", sans-serif; fill: #e1e0ee; }
.axis-label.warm { fill: #c79a6b; }
.axis-label.gold { fill: #d5c95b; }

.spec-tree { position: relative; margin: 0; padding: 0 0 0 15px; width: 150px; list-style: none; color: #f1f0fa; font-size: 10px; line-height: 21px; }
.spec-tree::before { content: ""; position: absolute; left: 6px; top: 18px; height: 96px; border-left: 1px solid #bbb9cc; }
.spec-tree li { position: relative; display: flex; align-items: center; gap: 2px; height: 21px; white-space: nowrap; }
.spec-tree li::before { content: ""; position: absolute; left: -8px; width: 8px; border-top: 1px solid #bbb9cc; }
.spec-tree .root { margin-left: -14px; gap: 1px; }
.spec-tree .root::before { display: none; }
.spec-tree .level2 { margin-left: 15px; }
.spec-tree .level3 { margin-left: 30px; }
.spec-tree .level2::after, .spec-tree .level3::after { content: ""; position: absolute; left: -9px; top: -6px; height: 14px; border-left: 1px solid #bbb9cc; }
.spec-tree .node { width: 18px; height: 17px; flex: none; }
.spec-tree .expander { position: absolute; z-index: 1; left: -14px; width: 10px; height: 10px; }
.spec-tree .selected { padding: 0 1px; line-height: 16px; background: #ff7f0e; color: #fff0a5; }
.spec-tree .active { text-decoration: underline; }

.sidebar {
  display: grid;
  grid-template-rows: 25px 69px 25px 64px 67px 1fr;
  align-content: start;
  padding-top: 4px;
  border-left: 2px solid #fff;
  background: linear-gradient(90deg, #ebeafa, #c8c6df);
}
.sidebar .group { position: relative; padding: 3px 0 0 1px; }
.sidebar .group::before { content: ""; position: absolute; left: 1px; top: 0; width: 9px; border-top: 1px solid #fff; }
.sidebar .tall { height: 16px; }
.sidebar .sketch-tool { height: 23px; padding-bottom: 3px; }
.tooltip { position: absolute; right: -1px; top: 20px; z-index: 2; padding: 0 1px; border: 1px solid #77756b; background: #ffffe4; color: #26261e; font-size: 6px; line-height: 8px; }

.statusbar { display: grid; grid-template-columns: 1fr auto 160px 16px 16px; gap: 2px; padding: 1px 3px 0 4px; overflow: hidden; font-size: 6px; line-height: 8px; color: #333; background: #cbc9da; }
.statusbar span, .statusbar label { white-space: nowrap; }
.statusbar input { min-width: 0; height: 10px; padding: 0; border: 0; background: #fff; }
.statusbar button { height: 10px; border: 1px solid #aaa8b8; background: #d9d8e0; }
```
